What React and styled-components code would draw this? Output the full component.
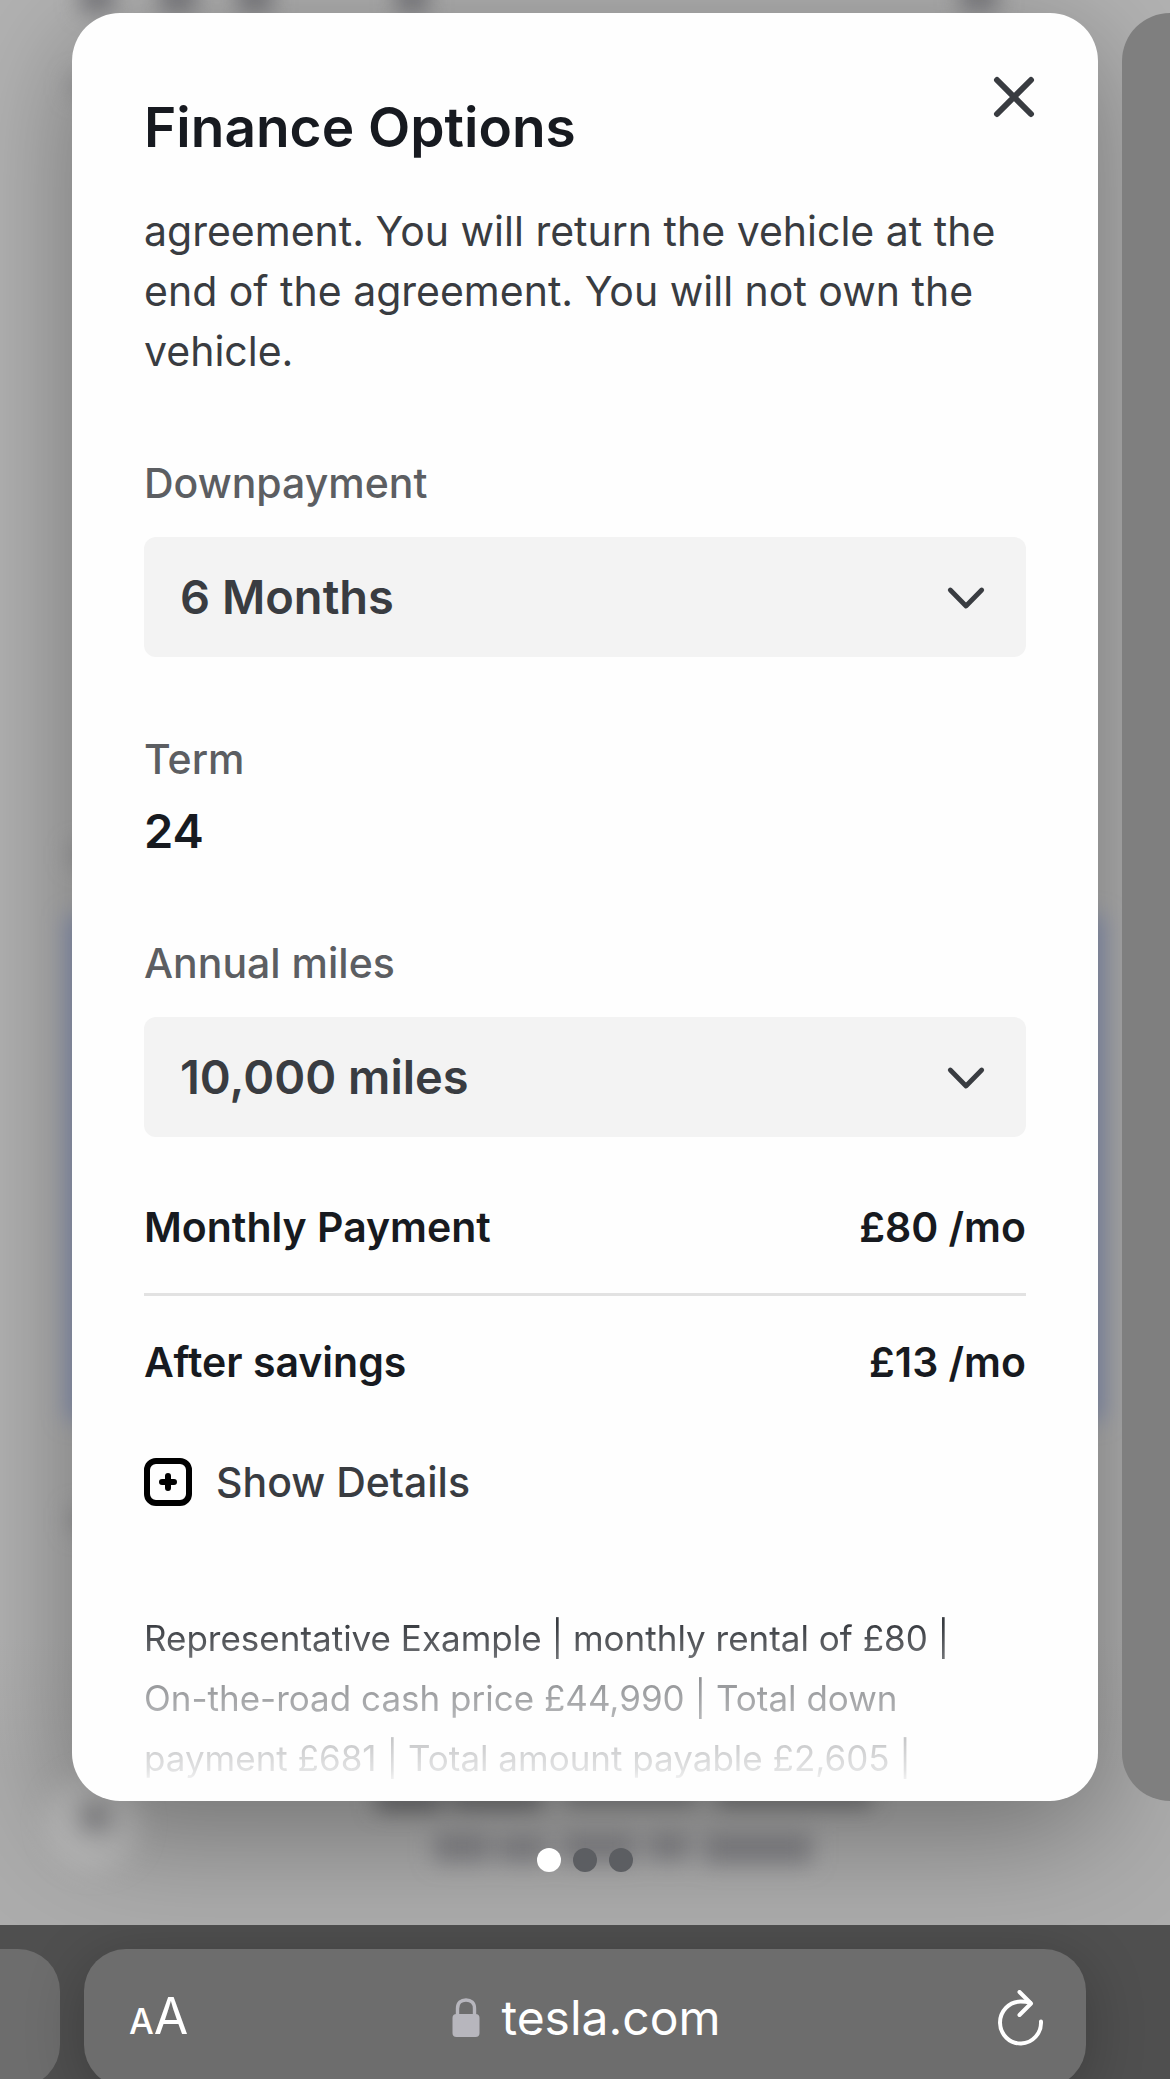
import React from "react";
import styled, { createGlobalStyle } from "styled-components";

const GlobalStyle = createGlobalStyle`
  * {
    box-sizing: border-box;
  }
  body {
    margin: 0;
    background: #4a4a4a;
    font-family: Inter, "Liberation Sans", sans-serif;
    color: #393c41;
  }
  button, select {
    font: inherit;
    color: inherit;
    border: 0;
    padding: 0;
    background: none;
    cursor: pointer;
  }
  h2, p, dl, dd {
    margin: 0;
  }
`;

const Page = styled.div`
  min-height: 100vh;
  overflow: hidden;
`;

const Stage = styled.main`
  position: relative;
  overflow: hidden;
  padding: 13px 0 53px;
  background: linear-gradient(#b2b2b2 85%, #acacac 92%);
`;

const Backdrop = styled.svg`
  position: absolute;
  inset: 0;
  width: 100%;
  height: 100%;
`;

/* Carousel */
const Track = styled.div`
  position: relative;
  display: flex;
  gap: 24px;
  padding: 0 72px;
`;

const Card = styled.section`
  flex: 0 0 100%;
  border-radius: 48px;
  background: #fefefe;
  box-shadow: 0 28px 120px rgba(0, 0, 0, 0.36);
`;

const NextCard = styled.div`
  position: relative;
  flex: 0 0 100%;
  border-radius: 48px;
  background: #7f7f7f;
`;

const CardHeader = styled.header`
  display: flex;
  justify-content: space-between;
  align-items: flex-start;
  height: 188px;
  padding: 48px 48px 0 72px;
`;

const Title = styled.h2`
  padding-top: 30px;
  font-size: 55px;
  line-height: 72px;
  font-weight: 600;
  color: #171a20;
`;

const CloseButton = styled.button`
  display: grid;
  place-items: center;
  width: 72px;
  height: 72px;
`;

const CardBody = styled.div`
  padding: 0 72px 13px;
  font-size: 41px;
  line-height: 60px;
`;

const Field = styled.div`
  display: flex;
  flex-direction: column;
  gap: ${(props) => props.$gap || "24px"};
  margin-top: 72px;
`;

const Label = styled.label`
  font-weight: 500;
  color: #5c5e62;
`;

const Value = styled.output`
  font-size: 47px;
  font-weight: 600;
  color: #171a20;
`;

const SelectBox = styled.div`
  display: grid;
  align-items: center;

  > * {
    grid-area: 1 / 1;
  }
  svg {
    justify-self: end;
    margin-right: 36px;
    pointer-events: none;
  }
`;

const Select = styled.select`
  appearance: none;
  width: 100%;
  height: 120px;
  padding: 0 96px 0 36px;
  border-radius: 12px;
  background: #f3f3f3;
  font-size: 47px;
  font-weight: 600;
`;

const Payments = styled.dl`
  margin-top: 60px;
`;

const PaymentRow = styled.div`
  display: flex;
  justify-content: space-between;
  font-weight: 600;
  color: #171a20;

  & + & {
    margin-top: 36px;
    padding-top: 36px;
    border-top: 3px solid #e2e2e2;
  }
`;

const DetailsButton = styled.button`
  display: flex;
  align-items: center;
  gap: 24px;
  margin-top: 60px;
  font-weight: 500;
`;

const Legal = styled.p`
  margin-top: 96px;
  font-size: 35px;
  mask-image: linear-gradient(
    #000 9%,
    rgba(0, 0, 0, 0.52) 42%,
    rgba(0, 0, 0, 0.14) 90%,
    transparent
  );
`;

const Dots = styled.nav`
  position: relative;
  display: flex;
  justify-content: center;
  gap: 12px;
  margin-top: 47px;
`;

const Dot = styled.button`
  width: 24px;
  height: 24px;
  border-radius: 50%;
  background: ${(props) => (props.$active ? "#fff" : "#5c5e62")};
`;

/* Browser bar */
const BrowserBar = styled.footer`
  display: flex;
  gap: 24px;
  height: 154px;
  padding: 24px 84px 0 0;
  overflow: hidden;
  background: #4f4f4f;
  color: #fff;
`;

const PreviousTab = styled.div`
  flex: 0 0 60px;
  height: 138px;
  border-radius: 0 42px 42px 0;
  background: #6d6d6d;
`;

const AddressBar = styled.div`
  flex: 1;
  display: grid;
  grid-template-columns: 1fr auto 1fr;
  align-items: center;
  height: 138px;
  padding: 0 42px 0 45px;
  border-radius: 42px;
  background: #6d6d6d;
  box-shadow: 0 12px 60px rgba(0, 0, 0, 0.24);
`;

const TextSizeButton = styled.button`
  justify-self: start;
  font-size: 50px;
  line-height: 60px;

  small {
    font-size: 35px;
    font-weight: 500;
  }
`;

const Address = styled.button`
  display: flex;
  align-items: center;
  gap: 21px;
  font-size: 48px;
  line-height: 60px;
`;

const ReloadButton = styled.button`
  display: flex;
  justify-self: end;
`;

// the order page behind the modal, out of focus
function BlurredPage() {
  return (
    <Backdrop aria-hidden="true" viewBox="0 0 1170 1925" preserveAspectRatio="none">
      <defs>
        <filter id="soft" x="-50%" y="-50%" width="200%" height="200%">
          <feGaussianBlur stdDeviation="11" />
        </filter>
      </defs>
      <g filter="url(#soft)">
        <rect x="66" y="916" width="1038" height="504" fill="#8c97b8" />
        <g fill="#77777b">
          <rect x="80" y="-16" width="34" height="28" />
          <rect x="160" y="-16" width="36" height="28" />
          <rect x="238" y="-16" width="34" height="28" />
          <rect x="396" y="-16" width="32" height="28" />
          <rect x="960" y="-16" width="38" height="26" />
        </g>
        <g fill="#98989a">
          <rect x="70" y="76" width="30" height="20" />
          <rect x="70" y="845" width="30" height="20" />
          <rect x="70" y="1508" width="30" height="24" />
        </g>
        <circle cx="94" cy="1822" r="48" fill="#bababa" />
        <rect x="80" y="1802" width="30" height="30" fill="#8c8c8f" />
        <g fill="#67676a">
          <rect x="376" y="1790" width="66" height="20" />
          <rect x="450" y="1790" width="92" height="18" />
          <rect x="566" y="1790" width="130" height="12" />
          <rect x="716" y="1790" width="156" height="15" />
        </g>
        <g fill="#858589">
          <rect x="434" y="1834" width="56" height="28" />
          <rect x="498" y="1836" width="50" height="26" />
          <rect x="562" y="1834" width="74" height="28" />
          <rect x="648" y="1834" width="42" height="26" />
          <rect x="704" y="1834" width="108" height="30" />
        </g>
      </g>
    </Backdrop>
  );
}

function CloseIcon() {
  return (
    <svg width="42" height="42" viewBox="0 0 42 42" fill="none" stroke="#393c41" strokeWidth="6" strokeLinecap="round">
      <path d="M4 4l34 34M38 4L4 38" />
    </svg>
  );
}

function ChevronIcon() {
  return (
    <svg width="48" height="48" viewBox="0 0 48 48" fill="none" stroke="#393c41" strokeWidth="4.8" strokeLinecap="round" strokeLinejoin="round">
      <path d="M8.3 17L24 33l15.700-16" />
    </svg>
  );
}

function PlusBoxIcon() {
  return (
    <svg width="48" height="48" viewBox="0 0 48 48" fill="none" stroke="#000" strokeWidth="6" strokeLinecap="round">
      <rect x="3" y="3" width="42" height="42" rx="9" />
      <path d="M24 18v12M18 24h12" />
    </svg>
  );
}

function LockIcon() {
  return (
    <svg width="28" height="40" viewBox="0 0 28 40" fill="none">
      <rect x="0.5" y="16" width="27" height="23" rx="4" fill="#b7b6bd" />
      <path d="M5.500 17v-6.500C5.500 4.800 9 2 14 2s8.500 2.800 8.500 8.500V17" stroke="#b7b6bd" strokeWidth="3.4" />
    </svg>
  );
}

function ReloadIcon() {
  return (
    <svg width="46" height="56" viewBox="0 0 46 56" fill="none" stroke="#fff" strokeWidth="4" strokeLinecap="round" strokeLinejoin="round">
      <path d="M43 31.500A20.500 21 0 1 1 22.500 11.500c3.500 0 7 .4 9.500 1.200" />
      <path d="M21.500 2l11.500 11.500L21.500 25" />
    </svg>
  );
}

function SelectField({ id, label, options }) {
  return (
    <Field>
      <Label htmlFor={id}>{label}</Label>
      <SelectBox>
        <Select id={id}>
          {options.map((option) => (
            <option key={option}>{option}</option>
          ))}
        </Select>
        <ChevronIcon />
      </SelectBox>
    </Field>
  );
}

const payments = [
  { name: "Monthly Payment", amount: "£80 /mo" },
  { name: "After savings", amount: "£13 /mo" },
];

function FinanceCard() {
  return (
    <Card aria-labelledby="finance-title">
      <CardHeader>
        <Title id="finance-title">Finance Options</Title>
        <CloseButton aria-label="Close">
          <CloseIcon />
        </CloseButton>
      </CardHeader>
      <CardBody>
        <p>
          agreement. You will return the vehicle at the
          <br />
          end of the agreement. You will not own the
          <br />
          vehicle.
        </p>
        <SelectField id="downpayment" label="Downpayment" options={["6 Months"]} />
        <Field $gap="12px">
          <Label htmlFor="term">Term</Label>
          <Value id="term">24</Value>
        </Field>
        <SelectField id="miles" label="Annual miles" options={["10,000 miles"]} />
        <Payments>
          {payments.map((item) => (
            <PaymentRow key={item.name}>
              <dt>{item.name}</dt>
              <dd>{item.amount}</dd>
            </PaymentRow>
          ))}
        </Payments>
        <DetailsButton>
          <PlusBoxIcon />
          Show Details
        </DetailsButton>
        <Legal>
          Representative Example | monthly rental of £80 |
          <br />
          On-the-road cash price £44,990 | Total down
          <br />
          payment £681 | Total amount payable £2,605 |
        </Legal>
      </CardBody>
    </Card>
  );
}

function App() {
  return (
    <Page>
      <GlobalStyle />
      <Stage>
        <BlurredPage />
        <Track>
          <FinanceCard />
          <NextCard />
        </Track>
        <Dots aria-label="Slides">
          {[1, 2, 3].map((slide) => (
            <Dot key={slide} $active={slide === 1} aria-label={`Slide ${slide}`} />
          ))}
        </Dots>
      </Stage>
      <BrowserBar>
        <PreviousTab />
        <AddressBar>
          <TextSizeButton aria-label="Text size">
            <small>A</small>A
          </TextSizeButton>
          <Address>
            <LockIcon />
            tesla.com
          </Address>
          <ReloadButton aria-label="Reload">
            <ReloadIcon />
          </ReloadButton>
        </AddressBar>
      </BrowserBar>
    </Page>
  );
}

export default App;
